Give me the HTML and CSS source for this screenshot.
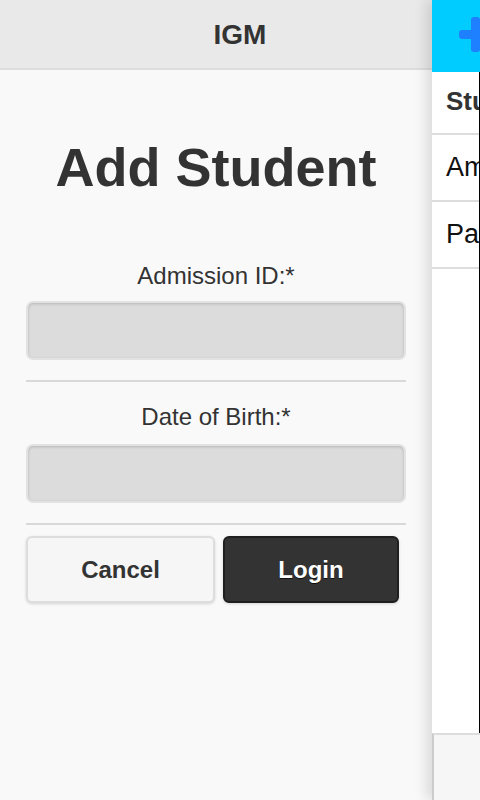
FILE: index.html
```html
<!DOCTYPE html>
<html>
<head>
<meta charset="utf-8">
<link rel="stylesheet" href="styles.css">
</head>
<body>
<div class="app">
  <aside class="panel">
    <header class="panel-header"><h2 class="brand">IGM</h2></header>
    <div class="panel-content">
      <h1 class="title">Add Student</h1>
      <label class="field-label">Admission ID:*</label>
      <div class="input"></div>
      <hr class="divider">
      <label class="field-label second">Date of Birth:*</label>
      <div class="input"></div>
      <hr class="divider">
      <div class="actions">
        <button class="btn btn-cancel">Cancel</button>
        <button class="btn btn-login">Login</button>
      </div>
    </div>
  </aside>
  <main class="page">
    <header class="page-header">
      <span class="plus plus-h"></span>
      <span class="plus plus-v"></span>
    </header>
    <div class="page-content">
      <ul class="list">
        <li class="row head">Students</li>
        <li class="row">Amanda</li>
        <li class="row">Paul</li>
      </ul>
    </div>
    <footer class="page-footer"></footer>
  </main>
</div>
</body>
</html>
```

FILE: styles.css
```css
* { box-sizing: border-box; }
html, body { margin: 0; padding: 0; }
body {
  font-family: "Liberation Sans", Arial, sans-serif;
  color: #333;
  width: 480px;
  height: 800px;
  overflow: hidden;
}
.app {
  display: flex;
  width: 480px;
  height: 800px;
}
.panel {
  flex: 0 0 432px;
  width: 432px;
  background: #f9f9f9;
  display: flex;
  flex-direction: column;
}
.panel-header {
  height: 70px;
  background: #e9e9e9;
  border-bottom: 2px solid #dddddd;
  display: flex;
  align-items: center;
  justify-content: center;
  padding-left: 48px;
}
.brand {
  margin: 0;
  font-size: 28px;
  font-weight: bold;
  color: #333;
  line-height: 1;
  padding-top: 2px;
}
.panel-content {
  padding: 0 26px;
  display: flex;
  flex-direction: column;
}
.title {
  margin: 66px 0 0;
  font-size: 54px;
  line-height: 62px;
  font-weight: bold;
  text-align: center;
  color: #333;
}
.field-label {
  display: block;
  text-align: center;
  font-size: 24px;
  line-height: 28px;
  margin-top: 64px;
  margin-bottom: 11px;
}
.field-label.second {
  margin-top: 21px;
  margin-bottom: 13px;
}
.input {
  height: 59px;
  background: #dcdcdc;
  border: 2px solid #e2e2e2;
  border-radius: 7px;
  box-shadow: inset 0 1px 3px rgba(0,0,0,0.18);
}
.divider {
  margin: 20px 0 0;
  border: 0;
  height: 2px;
  background: #d9d9d9;
}
.actions {
  display: flex;
  gap: 8px;
  margin-top: 11px;
}
.btn {
  height: 67px;
  border-radius: 6px;
  font-family: "Liberation Sans", Arial, sans-serif;
  font-size: 24px;
  font-weight: bold;
  padding: 0;
  box-shadow: 0 1px 3px rgba(0,0,0,0.15);
}
.btn-cancel {
  width: 189px;
  background: #f6f6f6;
  border: 2px solid #dddddd;
  color: #333;
}
.btn-login {
  width: 176px;
  background: #333333;
  border: 2px solid #1f1f1f;
  color: #fff;
  text-shadow: 0 1px 0 #111;
}
.page {
  flex: 0 0 48px;
  width: 48px;
  display: flex;
  flex-direction: column;
  overflow: hidden;
  position: relative;
  box-shadow: -6px 0 12px rgba(0,0,0,0.12);
  background: #fff;
}
.page-header {
  height: 72px;
  flex: none;
  background: #00ccff;
  position: relative;
  overflow: hidden;
}
.plus {
  position: absolute;
  background: #1f80ff;
  border-radius: 3px;
}
.plus-h {
  left: 27px;
  top: 30px;
  width: 35px;
  height: 9px;
}
.plus-v {
  left: 39px;
  top: 17px;
  width: 9px;
  height: 35px;
}
.page-content {
  flex: 1;
  background: #fff;
  border-right: 1px solid #000;
  overflow: hidden;
}
.list {
  list-style: none;
  margin: 0;
  padding: 0;
  width: 400px;
}
.row {
  height: 67px;
  border-bottom: 2px solid #dddddd;
  padding-left: 14px;
  display: flex;
  align-items: center;
  font-size: 27px;
  color: #111;
  white-space: nowrap;
}
.row.head {
  height: 63px;
  font-weight: bold;
  font-size: 26px;
  color: #333;
  padding-bottom: 3px;
}
.page-footer {
  height: 67px;
  flex: none;
  background: #f6f6f6;
  border-top: 2px solid #dddddd;
  border-left: 2px solid #cccccc;
}
```
